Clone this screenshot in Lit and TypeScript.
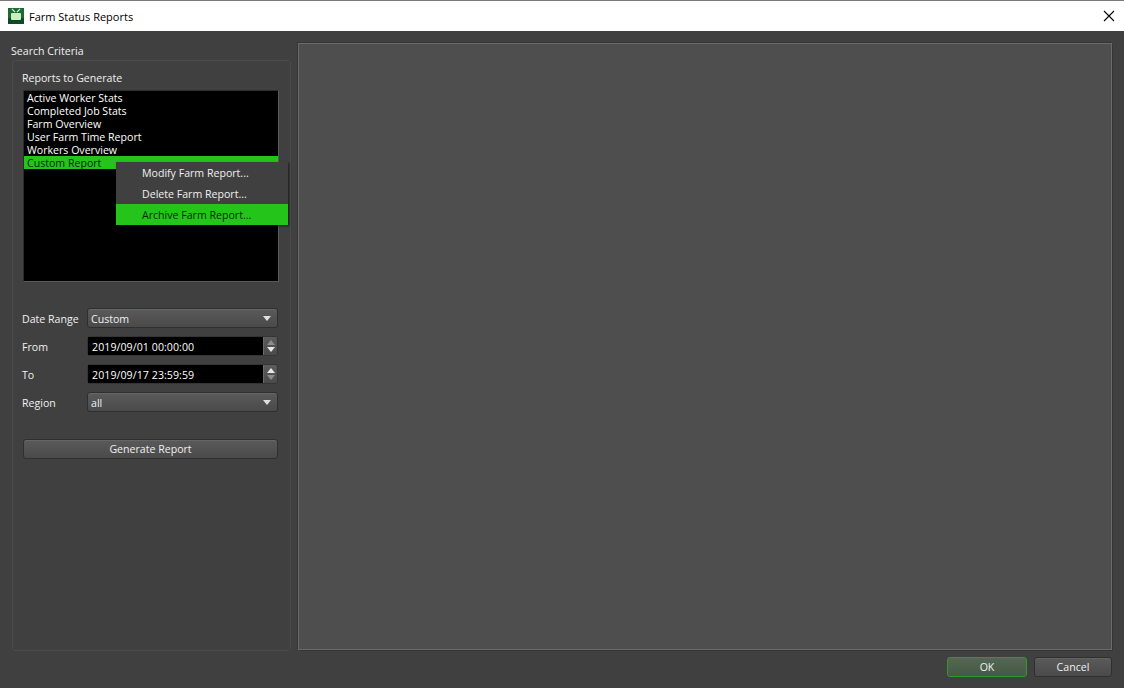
import { LitElement, html, css } from "lit";
import { customElement } from "lit/decorators.js";

@customElement("app-root")
export class AppRoot extends LitElement {
  static styles = css`
    :host { display: block; width: 1124px; height: 688px; overflow: hidden; font-family: "Open Sans", "Noto Sans", sans-serif; font-size: 10.6px; color: #f0f0f0; background: #404040; }
    * { box-sizing: border-box; }
    .titlebar { height: 31px; background: #fff; border-top: 1px solid #7a7a7a; display: flex; align-items: center; color: #000; font-size: 11px; padding: 0 0 0 8px; }
    .titlebar svg.logo { width: 16px; height: 16px; margin-right: 5px; }
    .titlebar .t { flex: 1; }
    .titlebar svg.x { width: 12px; height: 12px; margin-right: 9px; }
    .body { display: flex; height: 625px; padding: 11px 12px 0 12px; gap: 7px; }
    .left { width: 279px; display: flex; flex-direction: column; }
    .legend { height: 18px; line-height: 18px; margin-left: -1px; }
    .group { height: 591px; flex: none; border: 1px solid #4a4a4a; border-radius: 3px; padding: 10px 11px 0 10px; display: flex; flex-direction: column; }
    .cap { height: 14px; line-height: 14px; margin: 0 0 5px -1px; }
    .list { position: relative; height: 192px; background: #000; border: 1px solid #5a5a5a; border-top-color: #2c2c2c; border-left-color: #2c2c2c; }
    .item { height: 13px; line-height: 13px; padding: 1px 0 0 3px; color: #fff; white-space: nowrap; }
    .item.sel { background: #24c41a; color: #042b04; }
    .menu { position: absolute; left: 92px; top: 71px; width: 172px; height: 63px; background: #404040; box-shadow: 1px 1px 2px rgba(0,0,0,.6); }
    .mi { height: 21px; line-height: 21px; padding: 1px 0 0 26px; color: #f0f0f0; white-space: nowrap; }
    .mi.sel { background: #24c41a; color: #042b04; }
    .form { margin: 26px 1px 0 0; display: grid; grid-template-columns: 64px 1fr; row-gap: 8px; align-items: center; }
    .form label { white-space: nowrap; margin-left: -1px; padding-top: 2px; }
    .combo { height: 20px; border: 1px solid #2f2f2f; border-radius: 3px; background: linear-gradient(#5a5a5a, #4a4a4a); box-shadow: inset 0 1px 0 #666; display: flex; align-items: center; justify-content: space-between; padding: 0 6px 0 3px; }
    .combo > span:first-child { padding-top: 2px; }
    .combo .arrow { width: 0; height: 0; border-left: 4.5px solid transparent; border-right: 4.5px solid transparent; border-top: 5px solid #e0e0e0; }
    .spin { height: 20px; display: flex; border: 1px solid #353535; border-radius: 3px; }
    .spin .val { flex: 1; background: #000; color: #fff; padding: 1px 0 0 4px; line-height: 18px; letter-spacing: 0.07px; }
    .spin .btns { width: 14px; background: linear-gradient(#5c5c5c, #4a4a4a); border-left: 1px solid #6a6a6a; display: flex; flex-direction: column; align-items: center; justify-content: center; gap: 2px; border-radius: 0 2px 2px 0; }
    .up, .dn { width: 0; height: 0; border-left: 4.5px solid transparent; border-right: 4.5px solid transparent; }
    .up { border-bottom: 5px solid #e8e8e8; }
    .dn { border-top: 5px solid #e8e8e8; }
    .up.dim { border-bottom-color: #8c8c8c; }
    .dn.dim { border-top-color: #8c8c8c; }
    .gen { margin: 27px 1px 0 0; height: 20px; line-height: 18px; text-align: center; border: 1px solid #2f2f2f; border-radius: 3px; background: linear-gradient(#5a5a5a, #4a4a4a); box-shadow: inset 0 1px 0 #666; }
    .right { flex: 1; background: #4e4e4e; border: 1px solid #6a6a6a; box-shadow: -1px -1px 0 #353535, 1px 1px 0 #353535; height: 607px; margin-top: 1px; }
    .foot { display: flex; justify-content: flex-end; gap: 7px; padding: 1px 12px 0 0; }
    .btn { width: 78px; height: 20px; line-height: 18px; text-align: center; border: 1px solid #2f2f2f; border-radius: 3px; background: linear-gradient(#5a5a5a, #4a4a4a); box-shadow: inset 0 1px 0 #636363; }
    .btn.ok { width: 80px; border: 1px solid #2f9a2a; background: linear-gradient(#526852, #465846); box-shadow: none; }
  `;

  render() {
    return html`
      <div class="titlebar">
        <svg class="logo" viewBox="0 0 16 16">
          <rect width="16" height="16" fill="#1c6b36"/>
          <rect y="10" width="16" height="6" fill="#0f4a24"/>
          <path d="M4 1l3 3M12 1L9 4" stroke="#c8f0c0" stroke-width="1.2" fill="none"/>
          <rect x="3" y="5" width="10" height="7" rx="1" fill="#c8f0c0"/>
        </svg>
        <span class="t">Farm Status Reports</span>
        <svg class="x" viewBox="0 0 12 12"><path d="M1 1l10 10M11 1L1 11" stroke="#000" stroke-width="1.1" fill="none"/></svg>
      </div>
      <div class="body">
        <div class="left">
          <div class="legend">Search Criteria</div>
          <div class="group">
            <div class="cap">Reports to Generate</div>
            <div class="list">
              <div class="item">Active Worker Stats</div>
              <div class="item">Completed Job Stats</div>
              <div class="item">Farm Overview</div>
              <div class="item">User Farm Time Report</div>
              <div class="item">Workers Overview</div>
              <div class="item sel">Custom Report</div>
              <div class="menu">
                <div class="mi">Modify Farm Report...</div>
                <div class="mi">Delete Farm Report...</div>
                <div class="mi sel">Archive Farm Report...</div>
              </div>
            </div>
            <div class="form">
              <label>Date Range</label>
              <div class="combo"><span>Custom</span><span class="arrow"></span></div>
              <label>From</label>
              <div class="spin"><div class="val">2019/09/01 00:00:00</div><div class="btns"><span class="up dim"></span><span class="dn"></span></div></div>
              <label>To</label>
              <div class="spin"><div class="val">2019/09/17 23:59:59</div><div class="btns"><span class="up"></span><span class="dn dim"></span></div></div>
              <label>Region</label>
              <div class="combo"><span>all</span><span class="arrow"></span></div>
            </div>
            <div class="gen">Generate Report</div>
          </div>
        </div>
        <div class="right"></div>
      </div>
      <div class="foot">
        <div class="btn ok">OK</div>
        <div class="btn">Cancel</div>
      </div>
    `;
  }
}
